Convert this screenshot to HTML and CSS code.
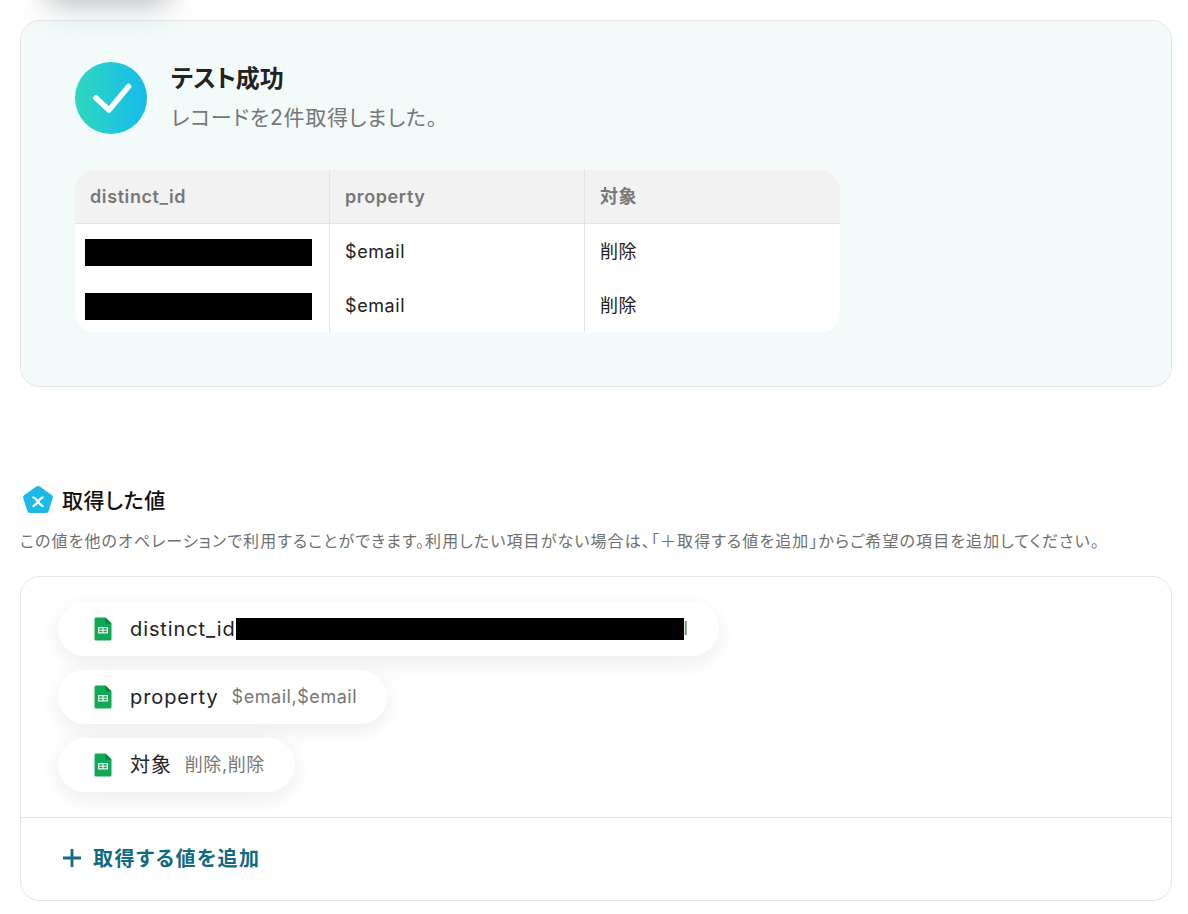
FILE: index.html
```html
<!DOCTYPE html>
<html lang="ja">
  <head>
    <title>テスト成功</title>
    <link rel="stylesheet" href="styles.css">
  </head>
  <body>
    <div class="top-shadow"></div>

    <section class="result">
      <div class="result-head">
        <svg class="check" width="72" height="72" viewBox="0 0 72 72">
          <defs>
            <linearGradient id="checkFill" x1="0" y1="0" x2="1" y2="0">
              <stop offset="0" stop-color="#2fd8c0"/>
              <stop offset="1" stop-color="#15bbeb"/>
            </linearGradient>
          </defs>
          <circle cx="36" cy="36" r="36" fill="url(#checkFill)"/>
          <path d="M21 36 L34 48 L53.500 24.500" fill="none" stroke="#fff" stroke-width="5.500" stroke-linecap="round" stroke-linejoin="round"/>
        </svg>
        <div>
          <h2 class="result-title">テスト成功</h2>
          <p class="result-desc">レコードを2件取得しました。</p>
        </div>
      </div>

      <div class="table">
        <div class="cell head">distinct_id</div>
        <div class="cell head">property</div>
        <div class="cell head">対象</div>
        <div class="cell redact-cell"><span class="redact"></span></div>
        <div class="cell">$email</div>
        <div class="cell">削除</div>
        <div class="cell redact-cell"><span class="redact"></span></div>
        <div class="cell">$email</div>
        <div class="cell">削除</div>
      </div>
    </section>

    <div class="values-head">
      <svg width="32" height="32" viewBox="0 1 32 32">
        <path d="M13.900 2.700 Q16 1.200 18.100 2.700 L29.600 11 Q31.300 12.300 30.700 14.200 L26.700 27 Q26.100 29 24 29 H8 Q5.900 29 5.300 27 L1.300 14.200 Q0.700 12.300 2.400 11 Z" fill="#1cb8e8"/>
        <path d="M11.500 13.500 Q14 14.500 16 17.700 Q18 21 20.500 22 M20.500 13.500 Q18 14.500 16 17.700 Q14 21 11.500 22" fill="none" stroke="#fff" stroke-width="2.400" stroke-linecap="round"/>
      </svg>
      <h3>取得した値</h3>
    </div>
    <p class="values-desc">この値を他のオペレーションで利用することができます。利用したい項目がない場合は、「＋取得する値を追加」からご希望の項目を追加してください。</p>

    <section class="values">
      <div class="pills">
        <div class="pill">
          <svg class="sheet" width="18" height="24" viewBox="0 0 18 24">
            <path d="M2 0.500 H11.500 L17.500 6.500 V22 Q17.500 23.500 16 23.500 H2 Q0.500 23.500 0.500 22 V2 Q0.500 0.500 2 0.500 Z" fill="#11a956"/>
            <path d="M11.500 0.500 L17.500 6.500 H13 Q11.500 6.500 11.500 5 Z" fill="#0b8043"/>
            <path d="M4 10 H14 V16.500 H4 Z M5.200 11.200 V12.700 H8.400 V11.200 Z M9.600 11.200 V12.700 H12.800 V11.200 Z M5.200 13.800 V15.300 H8.400 V13.800 Z M9.600 13.800 V15.300 H12.800 V13.800 Z" fill="#e8f6ee" fill-rule="evenodd"/>
          </svg>
          <span class="pill-name">distinct_id</span>
          <span class="redact long"></span>
          <span class="pill-rest">l</span>
        </div>
        <div class="pill">
          <svg class="sheet" width="18" height="24" viewBox="0 0 18 24">
            <path d="M2 0.500 H11.500 L17.500 6.500 V22 Q17.500 23.500 16 23.500 H2 Q0.500 23.500 0.500 22 V2 Q0.500 0.500 2 0.500 Z" fill="#11a956"/>
            <path d="M11.500 0.500 L17.500 6.500 H13 Q11.500 6.500 11.500 5 Z" fill="#0b8043"/>
            <path d="M4 10 H14 V16.500 H4 Z M5.200 11.200 V12.700 H8.400 V11.200 Z M9.600 11.200 V12.700 H12.800 V11.200 Z M5.200 13.800 V15.300 H8.400 V13.800 Z M9.600 13.800 V15.300 H12.800 V13.800 Z" fill="#e8f6ee" fill-rule="evenodd"/>
          </svg>
          <span class="pill-name">property</span>
          <span class="pill-value">$email,$email</span>
        </div>
        <div class="pill">
          <svg class="sheet" width="18" height="24" viewBox="0 0 18 24">
            <path d="M2 0.500 H11.500 L17.500 6.500 V22 Q17.500 23.500 16 23.500 H2 Q0.500 23.500 0.500 22 V2 Q0.500 0.500 2 0.500 Z" fill="#11a956"/>
            <path d="M11.500 0.500 L17.500 6.500 H13 Q11.500 6.500 11.500 5 Z" fill="#0b8043"/>
            <path d="M4 10 H14 V16.500 H4 Z M5.200 11.200 V12.700 H8.400 V11.200 Z M9.600 11.200 V12.700 H12.800 V11.200 Z M5.200 13.800 V15.300 H8.400 V13.800 Z M9.600 13.800 V15.300 H12.800 V13.800 Z" fill="#e8f6ee" fill-rule="evenodd"/>
          </svg>
          <span class="pill-name">対象</span>
          <span class="pill-value">削除,削除</span>
        </div>
      </div>
      <div class="add-row">
        <svg width="20" height="20" viewBox="0 0 20 20">
          <path d="M10 1 V19 M1 10 H19" stroke="#126a80" stroke-width="2.800" fill="none"/>
        </svg>
        <span>取得する値を追加</span>
      </div>
    </section>
  </body>
</html>
```

FILE: styles.css
```css
html, body {
  height: 100%;
}
body {
  margin: 0;
  padding: 20px 16px 0 20px;
  background-color: #fff;
  color: #222;
  font-family: Inter, 'Noto Sans CJK JP', sans-serif;
  font-feature-settings: "palt";
  overflow: hidden;
  box-sizing: border-box;
}

h2, h3, p {
  margin: 0;
}

.top-shadow {
  position: absolute;
  top: -50px;
  left: 42px;
  width: 132px;
  height: 50px;
  border-radius: 25px;
  box-shadow: 0 6px 30px rgba(60, 75, 85, 0.36);
}

.result {
  height: 367px;
  box-sizing: border-box;
  padding: 42px 54px 0;
  background-color: #f2fafa;
  border: 1px solid #e4e7e7;
  border-radius: 20px;
}

.result-head {
  display: flex;
  gap: 24px;
  height: 107px;
}

.check {
  margin-top: -1px;
}

.result-title {
  font-size: 24px;
  font-weight: 700;
  line-height: 32px;
}

.result-desc {
  margin-top: 7px;
  font-size: 21px;
  letter-spacing: 0.75px;
  line-height: 32px;
  color: #777;
}

.table {
  display: grid;
  grid-template-columns: repeat(3, 255px);
  grid-auto-rows: 54px;
  width: 765px;
  background-color: #fff;
  border-radius: 20px;
  overflow: hidden;
}

.cell {
  display: flex;
  align-items: center;
  padding: 2px 15px 0;
  font-size: 18px;
  line-height: 24px;
  letter-spacing: 0.6px;
  box-sizing: border-box;
  border-right: 1px solid #e4e4e4;
}

.cell:nth-child(3n) {
  border-right: none;
}

.head {
  height: 54px;
  padding-top: 0;
  background-color: #f2f2f2;
  border-bottom: 1px solid #e4e4e4;
  font-weight: 600;
  color: #777;
}

.redact-cell {
  padding: 2px 10px 0;
}

.redact {
  display: block;
  width: 227px;
  height: 27px;
  background-color: #000;
}

.values-head {
  display: flex;
  align-items: center;
  gap: 8px;
  margin-top: 98px;
  padding-left: 2px;
}

.values-head h3 {
  font-size: 21px;
  font-weight: 500;
  letter-spacing: 0.6px;
  line-height: 32px;
  color: #111;
}

.values-desc {
  margin-top: 12px;
  font-size: 16px;
  letter-spacing: 1.1px;
  line-height: 24px;
  color: #707070;
  white-space: nowrap;
}

.values {
  margin-top: 23px;
  height: 325px;
  box-sizing: border-box;
  border: 1px solid #e4e7e7;
  border-radius: 20px;
}

.pills {
  display: flex;
  flex-direction: column;
  align-items: flex-start;
  gap: 14px;
  height: 241px;
  box-sizing: border-box;
  padding: 25px 37px 0;
  border-bottom: 1px solid #e4e7e7;
}

.pill {
  display: flex;
  align-items: center;
  height: 54px;
  padding: 0 30px 0 36px;
  background-color: #fff;
  border-radius: 27px;
  box-shadow: 0 6px 24px rgba(0, 0, 0, 0.08);
}

.sheet {
  margin-right: 18px;
}

.pill-name {
  font-size: 20px;
  line-height: 28px;
  letter-spacing: 0.9px;
  margin-right: 13px;
}

.pill-value,
.pill-rest {
  font-size: 18px;
  line-height: 28px;
  letter-spacing: 0.55px;
  color: #777;
}

.redact.long {
  width: 448px;
  height: 22px;
  margin-left: -13px;
}

.add-row {
  display: flex;
  align-items: center;
  gap: 11px;
  padding: 25px 0 0 41px;
  font-size: 20px;
  letter-spacing: 1.5px;
  font-weight: 600;
  color: #126a80;
}
```
